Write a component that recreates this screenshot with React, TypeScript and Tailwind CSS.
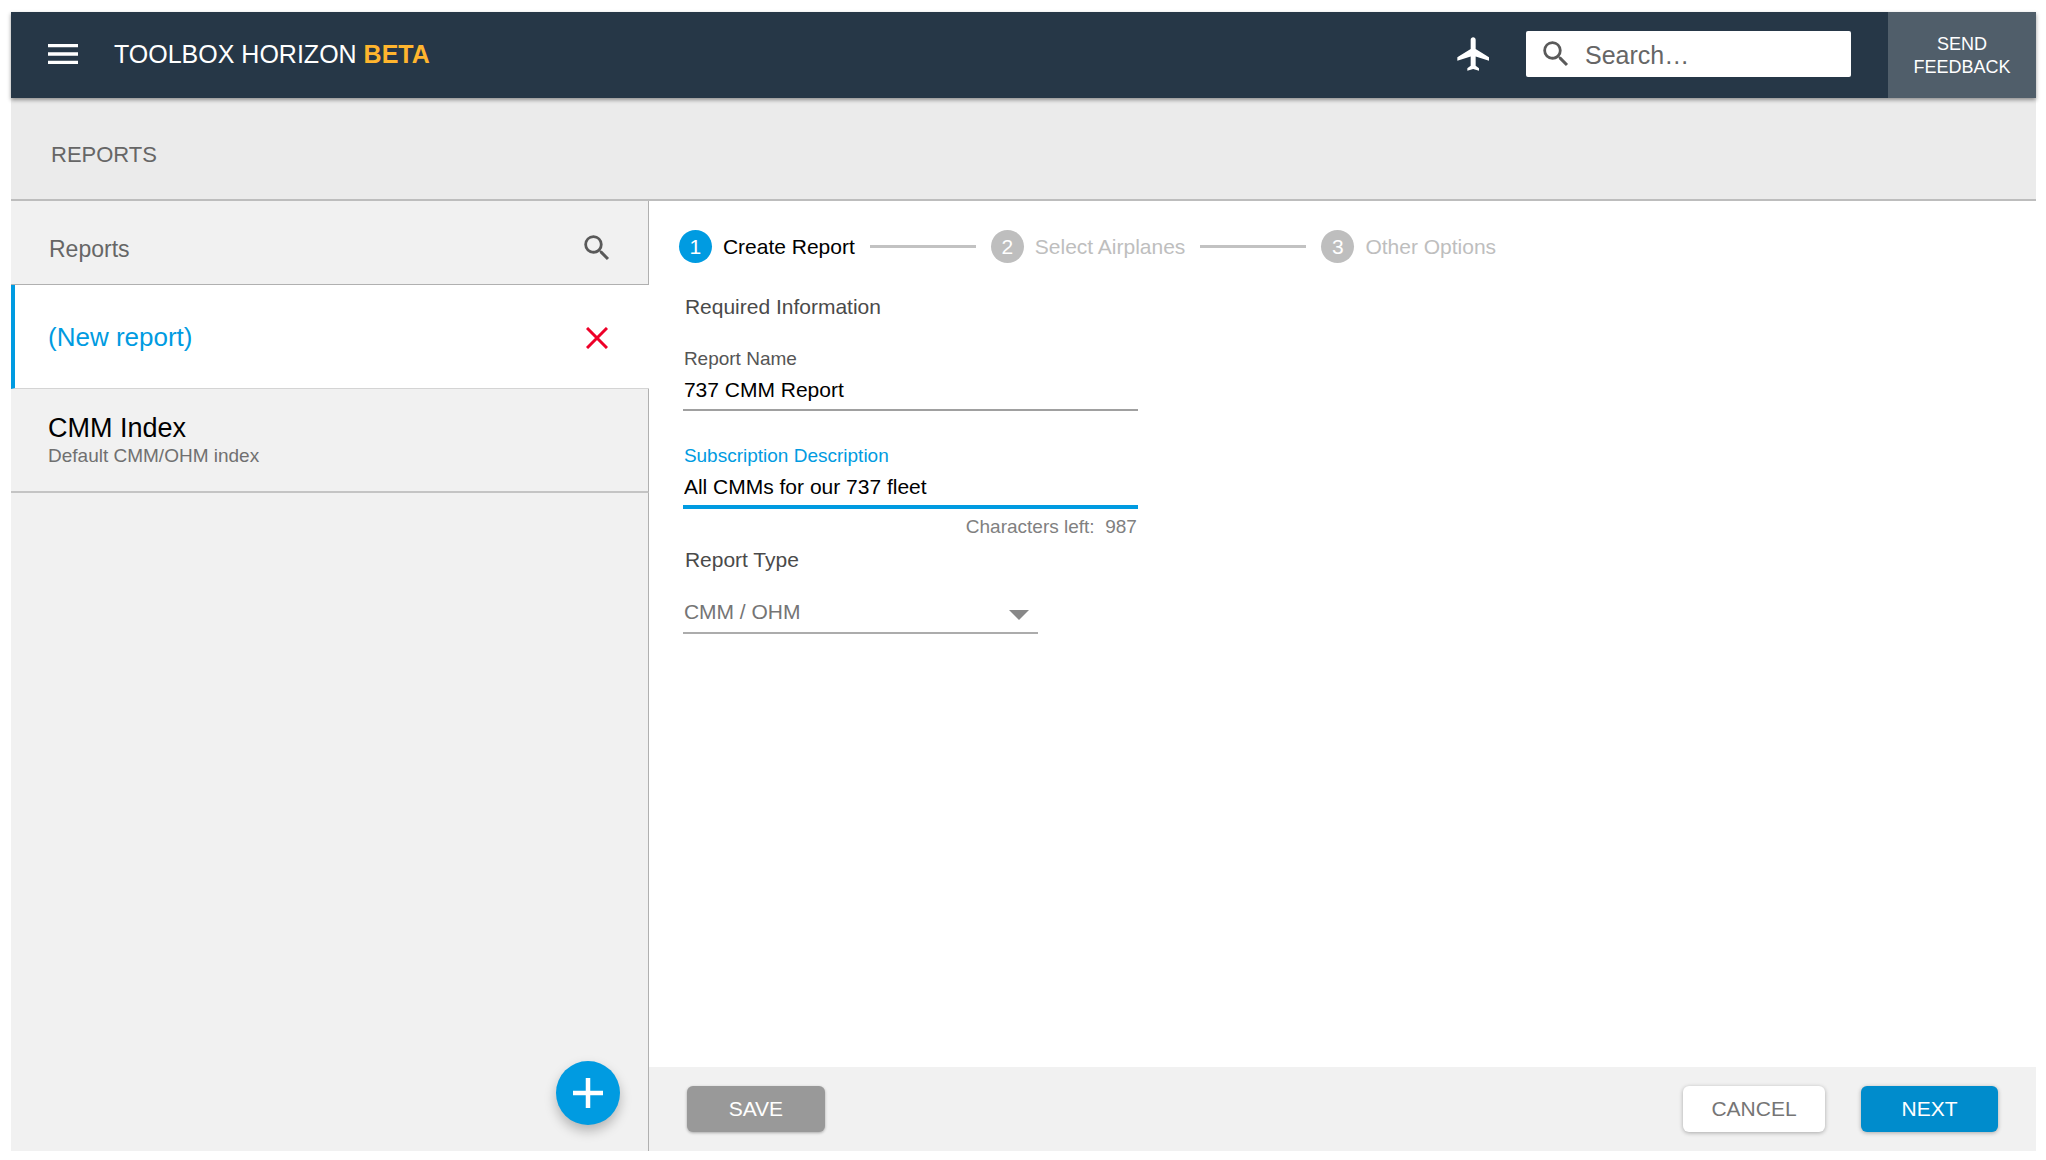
import { useState } from 'react';
import { MdFlight, MdMenu, MdSearch } from 'react-icons/md';

const MAX_DESCRIPTION = 1013;

interface StepProps {
  number: number;
  label: string;
  active?: boolean;
}

const steps: StepProps[] = [
  { number: 1, label: 'Create Report', active: true },
  { number: 2, label: 'Select Airplanes' },
  { number: 3, label: 'Other Options' },
];

const Header: React.FC = () => (
  <header className="relative z-10 flex h-[86px] shrink-0 bg-[#263747] text-white shadow-[0_2px_4px_rgba(0,0,0,0.4)]">
    <div className="flex flex-1 items-center pr-[37px] pb-0.5 pl-8">
      <button type="button" aria-label="Menu">
        <MdMenu size={40} />
      </button>
      <h1 className="ml-[31px] text-[25px] leading-8 whitespace-nowrap">
        TOOLBOX HORIZON <strong className="font-bold text-[#ffb52e]">BETA</strong>
      </h1>
      <button type="button" aria-label="Airplanes" className="ml-auto">
        <MdFlight size={40} />
      </button>
      <label className="ml-8 flex h-[46px] w-[325px] items-center rounded-xs bg-white pl-[13px] text-[#5a5a5a]">
        <MdSearch size={34} className="shrink-0" />
        <input
          type="search"
          aria-label="Search"
          placeholder="Search…"
          className="ml-3 w-full min-w-0 pt-0.5 text-[25px] leading-8 outline-none placeholder:text-[#666]"
        />
      </label>
    </div>
    <button type="button" className="w-[148px] bg-[#505e6a] pt-0.5 text-[18px] leading-[23px]">
      SEND<br />FEEDBACK
    </button>
  </header>
);

const Sidebar: React.FC = () => (
  <aside className="flex w-[31.5%] shrink-0 flex-col bg-[#f1f1f1]">
    <div className="flex h-[84px] items-center justify-between border-r border-b border-[#b0b0b0] pr-[34px] pl-[38px]">
      <h3 className="pt-3 text-[23px] leading-7 text-[#666]">Reports</h3>
      <button type="button" aria-label="Search reports" className="pt-2.5 text-[#5a5a5a]">
        <MdSearch size={34} />
      </button>
    </div>
    <div className="flex h-[104px] items-center justify-between border-b border-l-4 border-b-[#d4d4d4] border-l-[#009be1] bg-white pr-[41px] pl-[33px]">
      <a href="#new" className="text-[26px] leading-8 text-[#009be1]">(New report)</a>
      <button type="button" aria-label="Discard new report" className="pt-0.5 text-[#ee0028]">
        <svg width="22" height="22" viewBox="0 0 22 22" stroke="currentColor" strokeWidth="3">
          <path d="M1 1L21 21M21 1L1 21" />
        </svg>
      </button>
    </div>
    <a href="#cmm" className="flex h-[104px] flex-col justify-center gap-px border-r border-b-2 border-r-[#b0b0b0] border-b-[#c4c4c4] pl-[37px]">
      <span className="text-[27px] leading-[30px] text-black">CMM Index</span>
      <span className="text-[19px] leading-6 text-[#707070]">Default CMM/OHM index</span>
    </a>
    <div className="flex flex-1 items-end justify-end border-r border-[#b0b0b0] pr-7 pb-[26px]">
      <button
        type="button"
        aria-label="Add report"
        className="flex size-16 items-center justify-center rounded-full bg-[#009be1] text-white shadow-[0_6px_12px_rgba(0,0,0,0.25)]"
      >
        <svg width="30" height="30" viewBox="0 0 30 30" stroke="currentColor" strokeWidth="4.5">
          <path d="M15 0V30M0 15H30" />
        </svg>
      </button>
    </div>
  </aside>
);

const Stepper: React.FC = () => (
  <ol className="flex items-center text-[21px] leading-7 whitespace-nowrap">
    {steps.map((step, index) => (
      <li key={step.number} className="flex items-center">
        {index > 0 && <span className="mx-[15px] h-[3px] w-[106px] bg-[#c2c2c2]" />}
        <span
          className={`mr-[11px] flex size-[33px] items-center justify-center rounded-full text-white ${
            step.active ? 'bg-[#009be1]' : 'bg-[#bebebe]'
          }`}
        >
          {step.number}
        </span>
        <span className={step.active ? 'text-black' : 'text-[#bebebe]'}>{step.label}</span>
      </li>
    ))}
  </ol>
);

const ReportForm: React.FC = () => {
  const [name, setName] = useState('737 CMM Report');
  const [description, setDescription] = useState('All CMMs for our 737 fleet');

  return (
    <form id="report-form" className="mt-[30px] ml-1 w-[455px] max-w-full pb-8">
      <h3 className="pl-0.5 text-[21px] leading-7 text-[#4a4a4a]">Required Information</h3>
      <label htmlFor="name" className="mt-[26px] block pl-px text-[19px] leading-6 text-[#555]">Report Name</label>
      <input
        id="name"
        value={name}
        onChange={e => setName(e.target.value)}
        className="block h-10 w-full border-b-2 border-[#a0a0a0] pl-px text-[21px] text-black outline-none"
      />
      <label htmlFor="description" className="mt-[33px] block pl-px text-[19px] leading-6 text-[#009be1]">
        Subscription Description
      </label>
      <input
        id="description"
        value={description}
        maxLength={MAX_DESCRIPTION}
        onChange={e => setDescription(e.target.value)}
        className="block h-[41px] w-full border-b-4 border-[#009be1] pl-px text-[21px] text-black outline-none"
      />
      <p className="mt-1.5 pr-px text-right text-[19px] leading-6 whitespace-pre text-[#808080]">
        {`Characters left:  ${MAX_DESCRIPTION - description.length}`}
      </p>
      <label htmlFor="type" className="mt-[7px] block pl-0.5 text-[21px] leading-7 text-[#4a4a4a]">Report Type</label>
      <div className="relative mt-[18px] w-[355px]">
        <select
          id="type"
          className="block h-[42px] w-full appearance-none border-b-2 border-[#acacac] pl-px text-[21px] text-[#757575] outline-none"
        >
          <option>CMM / OHM</option>
        </select>
        <svg width="20" height="10" viewBox="0 0 20 10" fill="#888" className="pointer-events-none absolute top-[18px] right-[9px]">
          <path d="M0 0H20L10 10Z" />
        </svg>
      </div>
    </form>
  );
};

const Footer: React.FC = () => (
  <footer className="flex h-[84px] shrink-0 items-center bg-[#f1f1f1] pr-[38px] pl-[38px] text-[21px] leading-7">
    <button type="button" className="h-[46px] w-[138px] rounded-md bg-[#999] text-white shadow-[0_1px_3px_rgba(0,0,0,0.3)]">
      SAVE
    </button>
    <button type="button" className="ml-auto h-[46px] w-[142px] rounded-md bg-white text-[#757575] shadow-[0_1px_4px_rgba(0,0,0,0.3)]">
      CANCEL
    </button>
    <button type="submit" form="report-form" className="ml-9 h-[46px] w-[137px] rounded-md bg-[#008ccc] text-white shadow-[0_1px_4px_rgba(0,0,0,0.3)]">
      NEXT
    </button>
  </footer>
);

const App: React.FC = () => {
  return (
    <div className="flex min-h-screen flex-col bg-white pt-3 pr-[10px] pb-[9px] pl-[11px] font-['Liberation_Sans',Arial,sans-serif]">
      <Header />
      <div className="flex h-[103px] shrink-0 items-center border-b-2 border-[#bdbdbd] bg-[#ebebeb] pl-10">
        <h2 className="pt-3 text-[22px] leading-7 text-[#666]">REPORTS</h2>
      </div>
      <div className="flex flex-1">
        <Sidebar />
        <main className="flex min-w-0 flex-1 flex-col">
          <div className="flex-1 pt-[29px] pl-[30px]">
            <Stepper />
            <ReportForm />
          </div>
          <Footer />
        </main>
      </div>
    </div>
  );
};

export default App;
